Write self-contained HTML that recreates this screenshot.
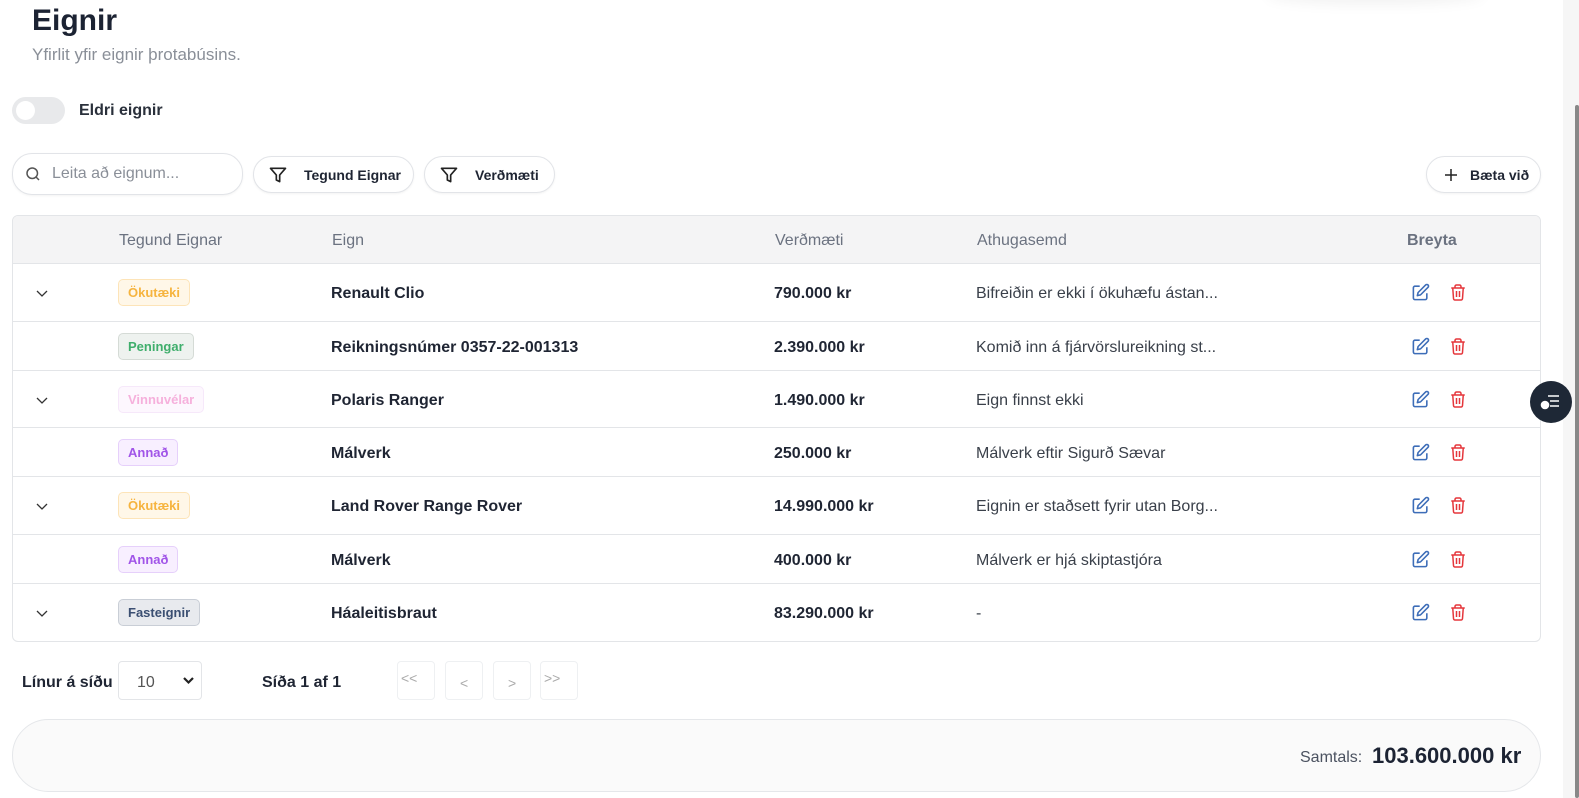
<!DOCTYPE html>
<html><head><meta charset="utf-8"><style>
*{box-sizing:border-box;margin:0;padding:0}
body{width:1579px;height:798px;overflow:hidden;background:#fff;font-family:"Liberation Sans",sans-serif;color:#1f2533;position:relative}
.abs{position:absolute}
h1{position:absolute;left:32px;top:4px;font-size:30px;font-weight:700;color:#1c2333}
.sub{left:32px;top:45px;font-size:17px;color:#8a8f98}
.toggle{left:12px;top:97px;width:53px;height:27px;border-radius:14px;background:#e8e9eb}
.toggle:after{content:"";position:absolute;left:4px;top:4px;width:19px;height:19px;border-radius:50%;background:#fff}
.pill{border:1px solid #e2e4e8;border-radius:20px;background:#fff;box-shadow:0 1px 2px rgba(0,0,0,.05);display:flex;align-items:center;font-size:14px;font-weight:700;color:#1f2533}
.table{left:12px;top:215px;width:1529px;height:427px;border:1px solid #e3e5e8;border-radius:6px;overflow:hidden}
.hdr{position:absolute;left:0;top:0;width:100%;height:48px;background:#f4f4f5;border-bottom:1px solid #e3e5e8}
.hdr span{position:absolute;top:16px;font-size:16px;color:#6b7280}
.row{position:absolute;left:0;width:100%;border-bottom:1px solid #e3e5e8}
.row span{position:absolute;font-size:16px}
.b{font-weight:700;color:#1f2533}
.n{color:#3a404a}
.badge{position:absolute;left:105px;height:27px;border-radius:5px;padding:0 9px;font-size:13px;font-weight:700;line-height:25px;border:1px solid}
.ok{background:#fff7e8;border-color:#fde4b8;color:#f6b43f}
.pe{background:#eef2ef;border-color:#d5dbd6;color:#3fae6c}
.vi{background:#fdf7fe;border-color:#f6e8fa;color:#f6b0dc}
.an{background:#f8efff;border-color:#e6d0fb;color:#a155e8}
.fa{background:#e8eaee;border-color:#c9ced6;color:#3b4f72}
.ico{position:absolute}
</style></head><body>
<h1>Eignir</h1>
<div class="abs sub">Yfirlit yfir eignir þrotabúsins.</div>
<div class="abs toggle"></div>
<div class="abs" style="left:79px;top:102px;font-size:16px;font-weight:700;color:#2a303b">Eldri eignir</div>

<div class="abs pill" style="left:12px;top:153px;width:231px;height:42px;font-weight:400;color:#8a8f98;font-size:16px">
<svg style="margin:0 10px 0 11px" width="18" height="18" viewBox="0 0 24 24" fill="none" stroke="#555" stroke-width="2"><circle cx="11" cy="11" r="7"/><path d="M20 20l-4-4"/></svg>Leita að eignum...</div>
<div class="abs pill" style="left:253px;top:156px;width:161px;height:37px"><svg style="margin:0 16px 0 14px" width="20" height="20" viewBox="0 0 24 24" fill="none" stroke="#222" stroke-width="2" stroke-linejoin="round"><path d="M3 4h18l-7 8v8l-4-2v-6z"/></svg>Tegund Eignar</div>
<div class="abs pill" style="left:424px;top:156px;width:131px;height:37px"><svg style="margin:0 16px 0 14px" width="20" height="20" viewBox="0 0 24 24" fill="none" stroke="#222" stroke-width="2" stroke-linejoin="round"><path d="M3 4h18l-7 8v8l-4-2v-6z"/></svg>Verðmæti</div>
<div class="abs pill" style="left:1426px;top:156px;width:115px;height:37px"><svg style="margin:0 10px 0 15px" width="18" height="18" viewBox="0 0 24 24" fill="none" stroke="#222" stroke-width="2"><path d="M12 4v16M4 12h16"/></svg>Bæta við</div>

<div class="abs table">
<div class="hdr"><span style="left:106px">Tegund Eignar</span><span style="left:319px">Eign</span><span style="left:762px">Verðmæti</span><span style="left:964px">Athugasemd</span><span style="left:1394px;font-weight:700">Breyta</span></div>
</div>

<div id="rows"></div>
<script>
const rows=[
[263,59,1,'ok','Ökutæki','Renault Clio','790.000 kr','Bifreiðin er ekki í ökuhæfu ástan...'],
[322,49,0,'pe','Peningar','Reikningsnúmer 0357-22-001313','2.390.000 kr','Komið inn á fjárvörslureikning st...'],
[371,57,1,'vi','Vinnuvélar','Polaris Ranger','1.490.000 kr','Eign finnst ekki'],
[428,49,0,'an','Annað','Málverk','250.000 kr','Málverk eftir Sigurð Sævar'],
[477,58,1,'ok','Ökutæki','Land Rover Range Rover','14.990.000 kr','Eignin er staðsett fyrir utan Borg...'],
[535,49,0,'an','Annað','Málverk','400.000 kr','Málverk er hjá skiptastjóra'],
[584,57,1,'fa','Fasteignir','Háaleitisbraut','83.290.000 kr','-']];
let h='';
rows.forEach((r,i)=>{const[t,hh,ch,c,bt,e,v,a]=r;const last=i==rows.length-1;
const mid=hh/2;
h+=`<div class="abs row" style="left:13px;width:1527px;top:${t}px;height:${hh}px;${last?'border:0':''}">`+
(ch?`<svg class="ico" style="left:22px;top:${mid-7}px" width="14" height="14" viewBox="0 0 14 14" fill="none" stroke="#333" stroke-width="1.3"><path d="M2 5l5 5 5-5"/></svg>`:'')+
`<div class="badge ${c}" style="top:${mid-14}px">${bt}</div>`+
`<span class="b" style="left:318px;top:${mid-8}px">${e}</span>`+
`<span class="b" style="left:761px;top:${mid-8}px">${v}</span>`+
`<span class="n" style="left:963px;top:${mid-8}px">${a}</span>`+
`<svg class="ico" style="left:1398px;top:${mid-10}px" width="19" height="19" viewBox="0 0 24 24" fill="none" stroke="#3d6db8" stroke-width="2" stroke-linejoin="round"><path d="M11 4H5a2 2 0 0 0-2 2v13a2 2 0 0 0 2 2h13a2 2 0 0 0 2-2v-6"/><path d="M18.5 2.5a2.1 2.1 0 0 1 3 3L12 15l-4 1 1-4z"/></svg>`+
`<svg class="ico" style="left:1436px;top:${mid-10}px" width="18" height="19" viewBox="0 0 24 24" fill="none" stroke="#e5363b" stroke-width="2" stroke-linejoin="round"><path d="M3 6h18M8 6V4a2 2 0 0 1 2-2h4a2 2 0 0 1 2 2v2M5 6l1 14a2 2 0 0 0 2 2h8a2 2 0 0 0 2-2l1-14M10 10v8M14 10v8"/></svg>`+
`</div>`;});
document.getElementById('rows').innerHTML=h;
</script>

<div class="abs" style="left:22px;top:674px;font-size:16px;font-weight:700;color:#1f2533">Línur á síðu</div>
<div class="abs" style="left:118px;top:661px;width:84px;height:39px;border:1px solid #e3e5e8;border-radius:4px;font-size:16px;color:#555;padding:12px 0 0 18px">10
<svg style="position:absolute;left:63px;top:14px" width="13" height="10" viewBox="0 0 13 10" fill="none" stroke="#222" stroke-width="2.2"><path d="M2 2l4.5 4.5L11 2"/></svg></div>
<div class="abs" style="left:262px;top:674px;font-size:16px;font-weight:700;color:#1f2533">Síða 1 af 1</div>
<div class="abs" style="left:397px;top:661px;width:38px;height:39px;border:1px solid #eef0f2;border-radius:4px;color:#aaa;font-size:14px;padding:8px 0 0 3px">&lt;&lt;</div>
<div class="abs" style="left:445px;top:661px;width:38px;height:39px;border:1px solid #eef0f2;border-radius:4px;color:#aaa;font-size:14px;padding:13px 0 0 14px">&lt;</div>
<div class="abs" style="left:493px;top:661px;width:38px;height:39px;border:1px solid #eef0f2;border-radius:4px;color:#aaa;font-size:14px;padding:13px 0 0 14px">&gt;</div>
<div class="abs" style="left:540px;top:661px;width:38px;height:39px;border:1px solid #eef0f2;border-radius:4px;color:#aaa;font-size:14px;padding:8px 0 0 3px">&gt;&gt;</div>

<div class="abs" style="left:12px;top:719px;width:1529px;height:73px;border:1px solid #e5e7ea;border-radius:37px;background:#fafafa"></div>
<div class="abs" style="left:1300px;top:749px;font-size:16px;color:#4b5260">Samtals:</div>
<div class="abs" style="left:1372px;top:743px;font-size:22px;font-weight:700;color:#1c2333">103.600.000 kr</div>

<div class="abs" style="left:1563px;top:0;width:16px;height:798px;background:#f6f6f6"></div>
<div class="abs" style="left:1575px;top:105px;width:4px;height:693px;background:#888;border-radius:2px"></div>
<div class="abs" style="left:1530px;top:381px;width:42px;height:42px;border-radius:50%;background:#1e2836"></div>
<svg class="abs" style="left:1540px;top:393px" width="20" height="18" viewBox="0 0 20 18" fill="none" stroke="#fff" stroke-width="1.6"><path d="M8 3h11M10 8h9M10 13h9"/><circle cx="5" cy="12" r="3.5" fill="#fff"/></svg>
<div class="abs" style="left:1265px;top:-20px;width:220px;height:20px;border-radius:50%;box-shadow:0 4px 14px rgba(0,0,0,.06)"></div>
</body></html>
